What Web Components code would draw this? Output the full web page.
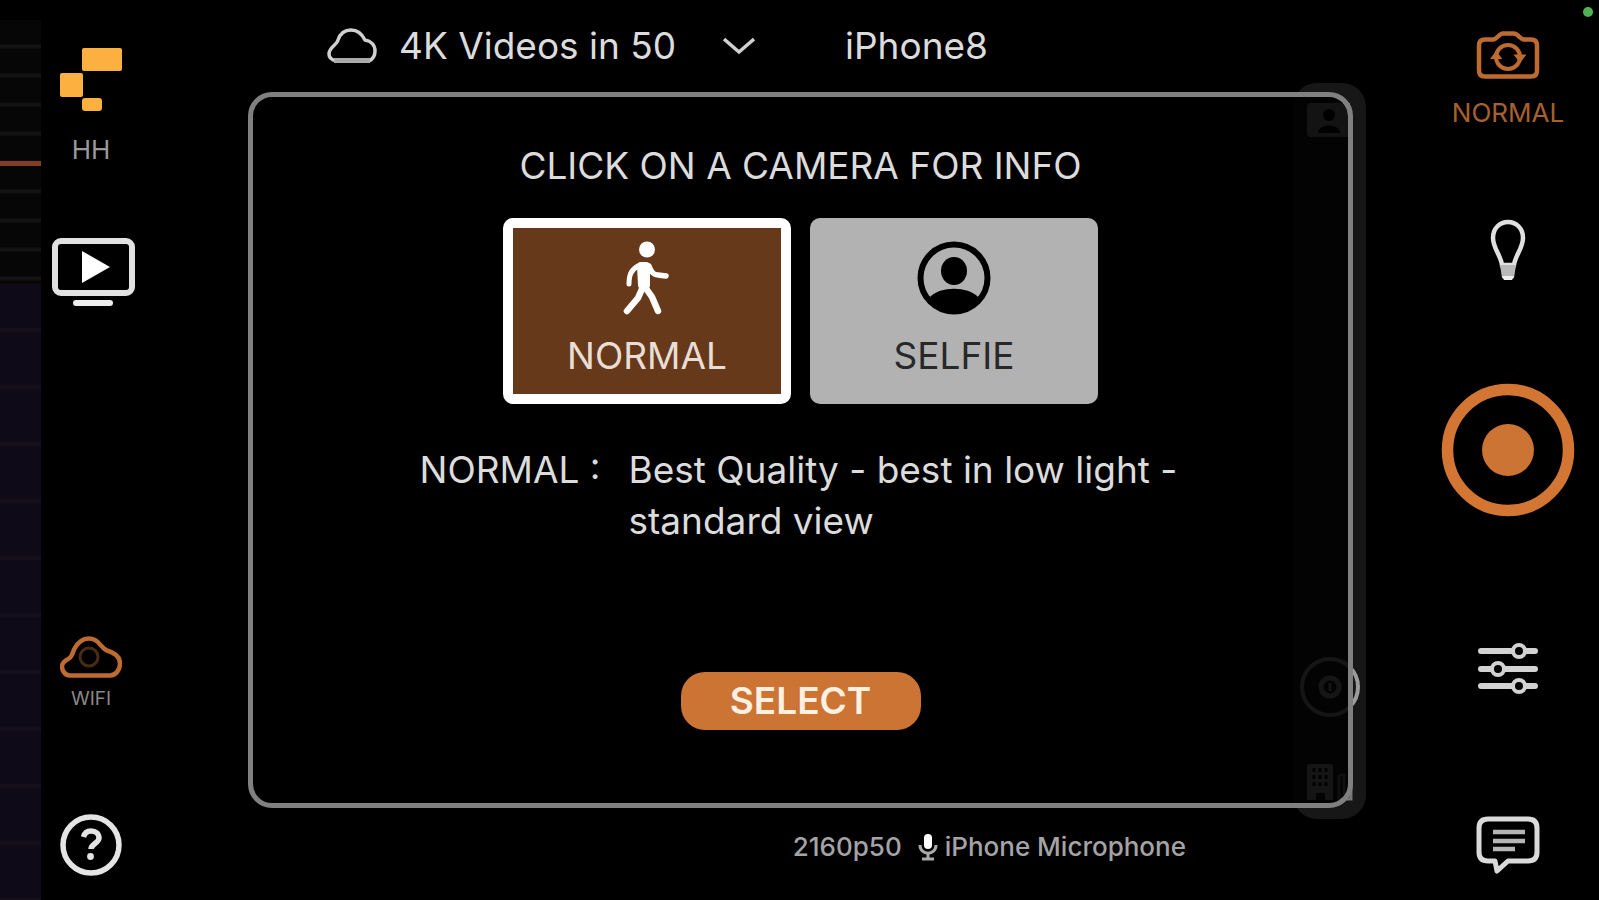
<!DOCTYPE html>
<html lang="en">
<head>
<meta charset="utf-8">
<meta name="viewport" content="width=device-width, initial-scale=1">
<title>Camera recorder</title>
<style>
  html, body { margin: 0; background: #000; }
  body { font-family: Inter, "Liberation Sans", sans-serif; color: #dcdcdc; --accent: #cc7433; --text: 37px; }
</style>
</head>
<body>
<recorder-app></recorder-app>

<script>
const define = (name, html, setup) => {
  const template = document.createElement('template');
  template.innerHTML = html;
  customElements.define(name, class extends HTMLElement {
    constructor() {
      super();
      this.attachShadow({ mode: 'open' }).append(template.content.cloneNode(true));
    }
    connectedCallback() { if (setup) setup(this, this.shadowRoot); }
  });
};

// Sliver of the live preview visible at the left edge
define('preview-strip', `
<style>
  :host { display: flex; flex-direction: column; padding-top: 20px; box-sizing: border-box; }
  .top { height: 264px; box-sizing: border-box; padding-top: 24px;
    background: repeating-linear-gradient(#0000 0 24px, #131313 25px 28px, #0000 29px) #060606; }
  .line { height: 5px; margin-top: 117px; background: #7d3f26; }
  .bottom { flex: 1; background: repeating-linear-gradient(#0000 0 43px, #15101c 45px 47px, #0000 49px 57px) #0e0a18; }
</style>
<div class="top"><div class="line"></div></div>
<div class="bottom"></div>`);

// Icon with an optional caption below it
define('rail-button', `
<style>
  :host { display: block; }
  button { display: flex; flex-direction: column; align-items: center; width: 100%; padding: 0; border: 0;
    background: none; color: inherit; font: inherit; cursor: pointer; }
  ::slotted(svg) { display: block; }
  span { font-size: var(--caption-size, 26px); line-height: 28px; color: var(--caption-color, #999); margin-top: var(--caption-gap, 0); }
  span:empty { display: none; }
</style>
<button type="button"><slot></slot><span></span></button>`,
(host, root) => {
  root.querySelector('span').textContent = host.getAttribute('caption') || '';
  root.querySelector('button').setAttribute('aria-label', host.getAttribute('label') || '');
});

define('left-rail', `
<style>
  :host { display: flex; flex-direction: column; padding: 48px 0 24px; box-sizing: border-box; }
  .tv { margin-top: 73px; }
  .wifi { margin-top: auto; --caption-size: 19px; --caption-color: #888; --caption-gap: 4px; }
  .logo { --caption-gap: 24px; }
  .help { margin-top: 101px; }
</style>
<rail-button class="logo" label="HH" caption="HH">
  <svg width="62" height="64" viewBox="0 0 62 64" fill="#fbb040"><rect x="22" width="40" height="23" rx="2"/><rect y="25" width="23" height="24" rx="2"/><rect x="22" y="50" width="20" height="13" rx="3"/></svg>
</rail-button>
<rail-button class="tv" label="Playback">
  <svg width="90" height="72" viewBox="-6 0 90 72"><rect x="3" y="4" width="77" height="52" rx="6" fill="none" stroke="#e2e2e2" stroke-width="6"/><path d="M30 14v32l28-16z" fill="#fff"/><path d="M24 66h34" stroke="#eee" stroke-width="6" stroke-linecap="round"/></svg>
</rail-button>
<rail-button class="wifi" label="WiFi" caption="WIFI">
  <svg width="62" height="46" viewBox="0 0 62 46" fill="none"><path d="M10 40.500h40c6 0 10-6 10-12 0-7-6-11-13-13-3-1-5-4-7-6-3-4-6-6-11-6-8 0-12 5-15 11-1 3-2 7-5 9-4 2-7 4-7 8s3 9 8 9z" stroke="#bd6b30" stroke-width="4.500" stroke-linejoin="round"/><circle cx="29" cy="22" r="9" stroke="#4a2c16" stroke-width="3"/></svg>
</rail-button>
<rail-button class="help" label="Help">
  <svg width="62" height="62" viewBox="0 0 62 62" fill="none" stroke="#e4e4e4"><circle cx="31" cy="31" r="28" stroke-width="5.500"/><path d="M23.500 23c1-4 4-6 7.500-6 5 0 8 3 8 7 0 5-8 6-8 11" stroke-width="5.500"/><circle cx="30.500" cy="42.500" r="3.400" fill="#e4e4e4" stroke="none"/></svg>
</rail-button>`);

define('right-rail', `
<style>
  :host { display: flex; flex-direction: column; padding: 30px 0 26px; box-sizing: border-box; position: relative; }
  .camera { --caption-color: #a8602f; --caption-gap: 17px; }
  .dot { position: absolute; top: 7px; right: 6px; width: 10px; height: 10px; border-radius: 50%; background: #4fb356; }
  .bulb { margin-top: 92px; }
  .record { margin-top: 102px; }
  .mix { margin-top: auto; }
  .chat { margin-top: 120px; }
</style>
<div class="dot"></div>
<rail-button class="camera" label="Camera: normal" caption="NORMAL">
  <svg width="64" height="52" viewBox="0 0 64 52" fill="none" stroke="#bd6b30" stroke-width="4.500"><path d="M9 9.500h8c4 0 6-6 10-6h11c4 0 6 6 10 6h7q6 0 6 6v25q0 6-6 6H9q-6 0-6-6v-25q0-6 6-6z"/><circle cx="32" cy="27" r="12" stroke-width="4"/><path d="M37.500 24.500h13L44 33zM26.500 29H14L20 21z" fill="#bd6b30" stroke="none"/></svg>
</rail-button>
<rail-button class="bulb" label="Torch">
  <svg width="38" height="62" viewBox="0 0 38 62" fill="none"><path d="M13 46c-1-9-9-17-9-27C4 9 11 3 19 3s15 6 15 16c0 10-8 18-9 27z" stroke="#e0e0e0" stroke-width="4.500"/><path d="M11 46h16l-2 13q-6 3-12 0z" fill="#b8b8b8"/><path d="M13 57h12l-2 4h-8z" fill="#eee"/></svg>
</rail-button>
<rail-button class="record" label="Record">
  <svg width="134" height="134" viewBox="0 0 134 134"><circle cx="67" cy="67" r="60.500" fill="none" stroke="#d37634" stroke-width="11.500"/><circle cx="67" cy="67" r="26" fill="#cc7433"/></svg>
</rail-button>
<rail-button class="mix" label="Settings">
  <svg width="62" height="54" viewBox="0 0 62 54" stroke="#d2d2d2" stroke-width="6" stroke-linecap="round" fill="#000"><path d="M4 9h54M4 27h54M4 44h54"/><g stroke-width="4"><circle cx="42" cy="9" r="6"/><circle cx="21" cy="27" r="6"/><circle cx="42" cy="44" r="6"/></g></svg>
</rail-button>
<rail-button class="chat" label="Messages">
  <svg width="64" height="58" viewBox="0 0 64 58" fill="none"><path d="M12 3h40q9 0 9 9v24q0 9-9 9H32l-11 10-2-10h-7q-9 0-9-9V12q0-9 9-9z" stroke="#dadada" stroke-width="5" stroke-linejoin="round"/><path d="M17 16h32M17 25h32M17 33h22" stroke="#b5b5b5" stroke-width="4.500"/></svg>
</rail-button>`);

define('top-bar', `
<style>
  :host { display: flex; align-items: center; height: 92px; padding-left: 186px; box-sizing: border-box; font-size: var(--text); line-height: 44px; }
  label { display: flex; align-items: center; }
  select { appearance: none; border: 0; padding: 0; margin: 0 46px 0 22px; background: none; color: inherit; font: inherit; line-height: 44px; }
  .device { margin-left: 90px; }
  svg { display: block; }
</style>
<label>
  <svg width="50" height="36" viewBox="0 0 50 36" fill="none" stroke="#d0d0d0" stroke-width="3.500" aria-hidden="true"><path d="M9 33h33c4-2 6-6 6-10 0-6-4-10-10-11C35 6 30 2 24 2c-7 0-11 4-13 10-1 5-9 7-9 14 0 4 3 6 7 7z"/><path d="M7 32.500h36" stroke-width="5" stroke="#aaa"/></svg>
  <select aria-label="Project"><option>4K Videos in 50</option></select>
  <svg width="32" height="18" viewBox="0 0 32 18" fill="none" stroke="#d0d0d0" stroke-width="3.500" aria-hidden="true"><path d="M1 2l15 13L31 2"/></svg>
</label>
<span class="device">iPhone8</span>`);

define('status-bar', `
<style>
  :host { display: flex; align-items: center; justify-content: flex-end; height: 92px; padding: 0 231px 14px 0; box-sizing: border-box;
    font-size: 26px; font-weight: 500; line-height: 32px; color: #a4a4a4; }
  svg { display: block; margin: 0 7px 0 16px; }
</style>
<span>2160p50</span>
<svg width="20" height="28" viewBox="0 0 20 28" fill="none" stroke="#aaa" stroke-width="3" aria-hidden="true"><rect x="6" y="1" width="8" height="15" rx="4" fill="#fff" stroke="none"/><path d="M2 12c0 11 16 11 16 0M10 20v5M4 26h12"/></svg>
<span>iPhone Microphone</span>`);

define('camera-card', `
<style>
  :host { display: block; }
  button { width: 288px; height: 186px; box-sizing: border-box; display: flex; flex-direction: column; align-items: center; padding: 23px 0 0;
    border: 0; border-radius: 10px; background: #b2b2b2; color: #282828; font: inherit; font-size: var(--text); line-height: 44px; cursor: pointer; }
  button[aria-pressed=true] { border: 10px solid #fff; padding-top: 13px; background: #66391a; color: #e9ded6; }
  ::slotted(svg) { display: block; margin-bottom: 19px; }
</style>
<button type="button"><slot></slot><span></span></button>`,
(host, root) => {
  root.querySelector('span').textContent = host.getAttribute('name');
  root.querySelector('button').setAttribute('aria-pressed', host.hasAttribute('selected'));
});

define('tool-tray', `
<style>
  :host { display: flex; flex-direction: column; box-sizing: border-box; padding: 20px 5px 17px; align-items: center; border-radius: 24px; background: #171717; }
  svg { display: block; }
  .lens { margin-top: auto; margin-bottom: 46px; }
</style>
<svg width="46" height="34" viewBox="0 0 46 34"><path d="M0 4q0-4 4-4h39v34H4q-4 0-4-4z" fill="#888"/><circle cx="22" cy="12" r="6" fill="#000"/><path d="M11 30c0-10 22-10 22 0z" fill="#000"/></svg>
<svg class="lens" width="62" height="62" viewBox="0 0 62 62" fill="none" stroke="#9c9c9c"><circle cx="31" cy="31" r="28" stroke-width="4"/><circle cx="31" cy="31" r="9" stroke-width="5"/><path d="M31 27v8" stroke-width="3"/></svg>
<svg width="46" height="38" viewBox="0 0 46 38"><path d="M0 3q0-3 3-3h20q3 0 3 3v33h-8v-7H9v7H0z" fill="#999"/><path d="M7 4v21M13 4v21M19 4v21" stroke="#111" stroke-width="3" stroke-dasharray="4 3"/><path d="M32 11h5v20M32 11v24h12V12" stroke="#777" stroke-width="3" fill="none"/></svg>`);

define('camera-panel', `
<style>
  :host { display: flex; position: relative; margin: 0 64px 0 107px; }
  tool-tray { position: absolute; top: -9px; bottom: -11px; right: -13px; width: 73px; }
  section { position: relative; flex: 1; display: flex; flex-direction: column; align-items: center; box-sizing: border-box;
    padding: 44px 24px 73px; border: 5px solid #808080; border-radius: 24px; background: #000000dc; background-clip: padding-box; }
  h1 { margin: 0; font-size: var(--text); line-height: 50px; font-weight: 400; }
  .cards { display: flex; gap: 19px; margin-top: 27px; }
  dl { display: grid; grid-template-columns: 209px 553px; margin: 40px 0 0; font-size: var(--text); line-height: 51px; }
  dd { margin: 0; }
  .select { width: 240px; height: 58px; margin-top: auto; padding: 0; border: 0; border-radius: 24px; background: var(--accent); color: #fff0e4;
    font: inherit; font-size: var(--text); font-weight: 600; line-height: 58px; cursor: pointer; }
</style>
<tool-tray></tool-tray>
<section>
  <h1>CLICK ON A CAMERA FOR INFO</h1>
  <div class="cards">
    <camera-card name="NORMAL" selected>
      <svg width="48" height="74" viewBox="0 0 48 74" fill="none" stroke="#fff" stroke-linecap="round" stroke-linejoin="round"><circle cx="24" cy="8.500" r="8" fill="#fff" stroke="none"/><path d="M18 25h5v19h-4z" stroke-width="8" fill="#fff"/><path d="M15 25c-7 4-9 9-9 18" stroke-width="5"/><path d="M26 25c2 6 5 9 9 9l8 1" stroke-width="5.500"/><path d="M22 46l7 10 6 14" stroke-width="6.500"/><path d="M19 48l-4 9-11 13" stroke-width="6.500"/></svg>
    </camera-card>
    <camera-card name="SELFIE">
      <svg width="74" height="74" viewBox="0 0 74 74"><circle cx="37" cy="37" r="33.500" fill="none" stroke="#000" stroke-width="6"/><ellipse cx="37" cy="30" rx="13" ry="14" fill="#000"/><path d="M13 56c10-11 38-11 48 0-10 18-38 18-48 0z" fill="#000"/></svg>
    </camera-card>
  </div>
  <dl><dt>NORMAL :</dt><dd>Best Quality - best in low light - standard view</dd></dl>
  <button class="select" type="button">SELECT</button>
</section>`);

define('recorder-app', `
<style>
  :host { display: grid; grid-template-columns: 41px 100px minmax(0, 1fr) 182px; min-height: 100vh; background: #000; }
  main { display: flex; flex-direction: column; }
  camera-panel { flex: 1; }
</style>
<preview-strip></preview-strip>
<left-rail></left-rail>
<main>
  <top-bar></top-bar>
  <camera-panel></camera-panel>
  <status-bar></status-bar>
</main>
<right-rail></right-rail>`);
</script>
</body>
</html>
